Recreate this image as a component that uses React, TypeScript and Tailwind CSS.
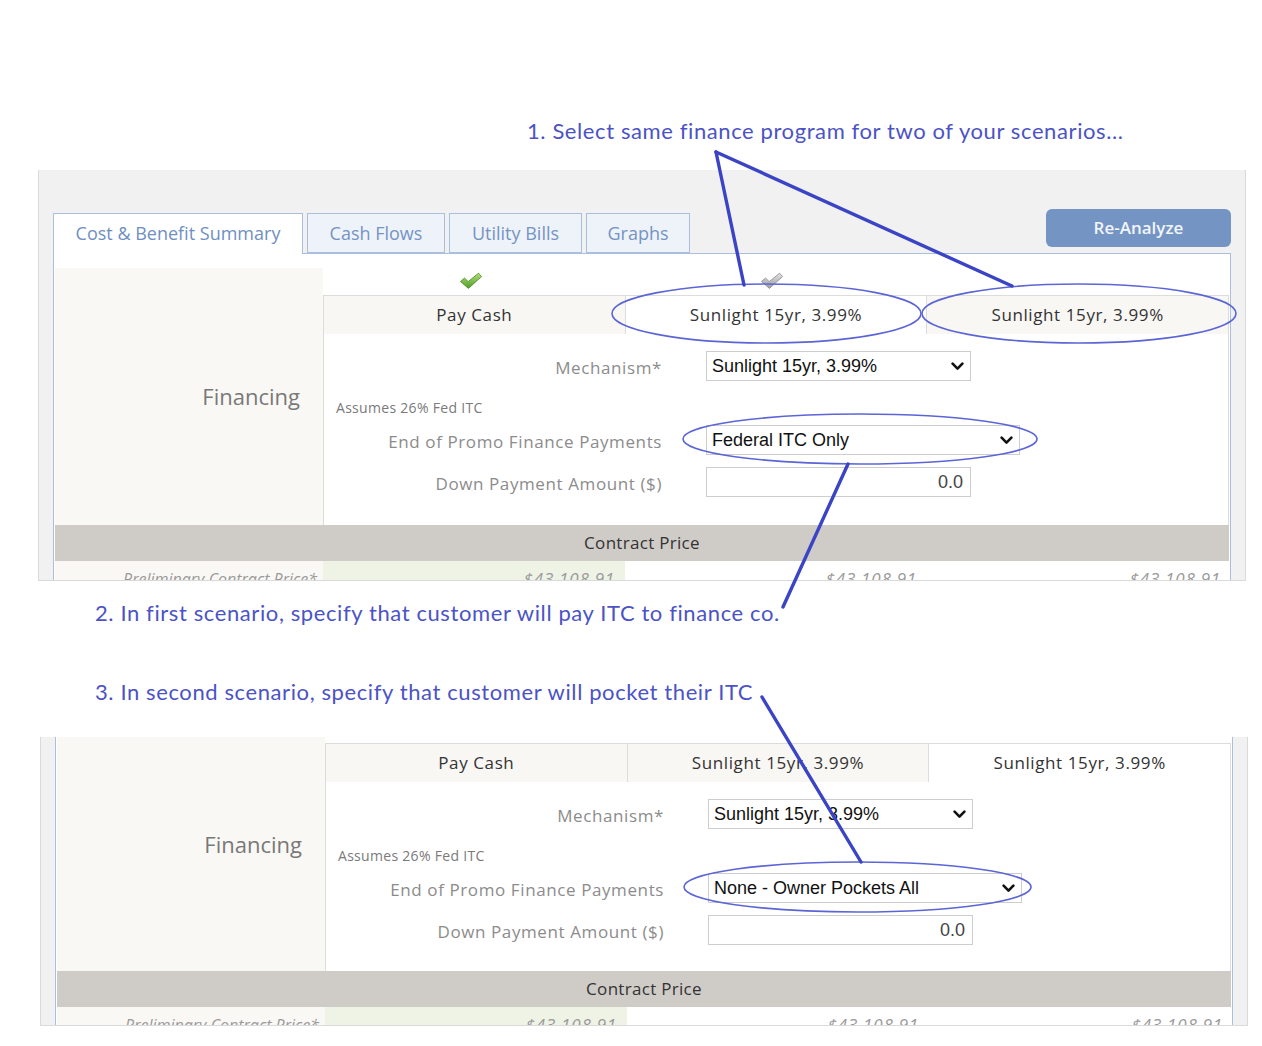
import { clsx } from 'clsx'

const columns = ['Pay Cash', 'Sunlight 15yr, 3.99%', 'Sunlight 15yr, 3.99%']

function Chevron() {
  return (
    <svg width="13" height="9" viewBox="0 0 13 9" className="ml-auto mr-[6px] shrink-0">
      <polyline
        points="1.6,1.6 6.5,6.6 11.4,1.6"
        fill="none"
        stroke="#111"
        strokeWidth="2.6"
        strokeLinecap="round"
        strokeLinejoin="round"
      />
    </svg>
  )
}

function FakeSelect({ value, className }: { value: string; className: string }) {
  return (
    <div
      className={clsx(
        "flex h-[30px] items-center border border-[#cdcdcd] bg-white pl-[5px] font-['Liberation_Sans',Arial,sans-serif] text-[18px] text-[#111]",
        className,
      )}
    >
      <span className="whitespace-nowrap">{value}</span>
      <Chevron />
    </div>
  )
}

function Check({ gray }: { gray?: boolean }) {
  const id = gray ? 'chk-gray' : 'chk-green'
  return (
    <svg width="24" height="18" viewBox="0 0 24 18">
      <defs>
        <linearGradient id={id} x1="0" y1="0" x2="0" y2="1">
          <stop offset="0" stopColor={gray ? '#e2e2e2' : '#b4e07a'} />
          <stop offset="1" stopColor={gray ? '#9c9c9c' : '#4f9b26'} />
        </linearGradient>
      </defs>
      <path
        d="M1.5 9.5 L5.5 6 L9.2 9.6 L19.6 1.2 L22.6 4.6 L9.4 16.4 Z"
        fill={`url(#${id})`}
        stroke={gray ? '#8a8a8a' : '#4a8a22'}
        strokeWidth="0.8"
        strokeLinejoin="round"
      />
    </svg>
  )
}

function FormRow({ label, children }: { label: string; children: React.ReactNode }) {
  return (
    <div className="flex h-[30px] items-center">
      <div className="w-[338px] whitespace-nowrap pt-[4px] text-right text-[17px] tracking-[0.6px] text-[#8c8c8c]">
        {label}
      </div>
      <div className="ml-[44px]">{children}</div>
    </div>
  )
}

function Scenario({
  selected,
  promo,
  showTabs,
  showChecks,
  topGap,
  bodyPb,
  finPad,
  shift,
  height,
}: {
  selected: number
  promo: string
  showTabs: boolean
  showChecks: boolean
  topGap: string
  bodyPb: string
  finPad: string
  shift: string
  height: string
}) {
  return (
    <div
      className={clsx(
        "w-[1208px] overflow-hidden border-x border-b border-[#dadada] bg-[#f1f1f1] px-[14px] font-['Open_Sans',sans-serif]",
        shift,
        height,
        showTabs ? 'pt-[39px]' : 'pt-0',
      )}
    >
      {showTabs && (
        <div className="flex h-[44px] items-start">
          <div className="mt-[4px] flex gap-[4px]">
            <div className="relative z-10 flex h-[41px] w-[250px] items-start justify-center border border-b-0 border-[#a9bfdd] bg-white pt-[6px] text-[18px] text-[#6f8fc2]">
              Cost &amp; Benefit Summary
            </div>
            <div className="flex h-[40px] w-[138px] items-center justify-center border border-[#a9bfdd] bg-[#eef3f9] text-[18px] text-[#7593c4]">
              Cash Flows
            </div>
            <div className="flex h-[40px] w-[133px] items-center justify-center border border-[#a9bfdd] bg-[#eef3f9] text-[18px] text-[#7593c4]">
              Utility Bills
            </div>
            <div className="flex h-[40px] w-[104px] items-center justify-center border border-[#a9bfdd] bg-[#eef3f9] text-[18px] text-[#7593c4]">
              Graphs
            </div>
          </div>
          <button className="ml-auto flex h-[38px] w-[185px] items-center justify-center rounded-[6px] bg-[#7494c3] text-[17px] font-semibold text-[#f2f5fb]">
            Re-Analyze
          </button>
        </div>
      )}

      <div
        className={clsx(
          'border-x border-[#a9bfdd] bg-white px-[1px]',
          showTabs ? 'border-t pt-[14px]' : 'pt-0',
        )}
      >
        <div className="grid grid-cols-[268px_1fr]">
          <div
            className={clsx(
              'flex items-center justify-end bg-[#faf8f5] pr-[23px] text-[22px] text-[#787878]',
              finPad,
            )}
          >
            Financing
          </div>
          <div>
            <div className={clsx('grid grid-cols-3', topGap)}>
              {showChecks && (
                <>
                  <div className="flex justify-center pt-[4px] pr-[6px]">
                    <Check />
                  </div>
                  <div className="flex justify-center pt-[4px] pr-[8px]">
                    <Check gray />
                  </div>
                </>
              )}
            </div>
            <div className="grid h-[39px] grid-cols-3 border-t border-r border-[#dcdcdc]">
              {columns.map((c, i) => (
                <div
                  key={i}
                  className={clsx(
                    'flex items-center justify-center border-l border-[#dcdcdc] text-[17px] tracking-[0.6px] text-[#333]',
                    i === selected ? 'bg-white' : 'bg-[#f9f7f4]',
                  )}
                >
                  {c}
                </div>
              ))}
            </div>
            <div className={clsx('border-x border-[#dcdcdc] pt-[17px]', bodyPb)}>
              <FormRow label="Mechanism*">
                <FakeSelect value="Sunlight 15yr, 3.99%" className="w-[265px]" />
              </FormRow>
              <div className="mt-[19px] h-[16px] pl-[12px] text-[14px] leading-[16px] tracking-[0.3px] text-[#7a7a7a]">
                Assumes 26% Fed ITC
              </div>
              <div className="mt-[9px]">
                <FormRow label="End of Promo Finance Payments">
                  <FakeSelect value={promo} className="w-[314px]" />
                </FormRow>
              </div>
              <div className="mt-[12px]">
                <FormRow label="Down Payment Amount ($)">
                  <div className="flex h-[30px] w-[265px] items-center justify-end border border-[#cdcdcd] bg-white pr-[7px] font-['Liberation_Sans',Arial,sans-serif] text-[18px] text-[#444]">
                    0.0
                  </div>
                </FormRow>
              </div>
            </div>
          </div>
        </div>

        <div className="flex h-[36px] items-center justify-center bg-[#cfccc7] text-[17px] tracking-[0.3px] text-[#333]">
          Contract Price
        </div>

        <div className="grid h-[30px] grid-cols-[268px_repeat(3,1fr)] italic text-[#9a9a9a]">
          <div className="whitespace-nowrap bg-[#faf8f5] pt-[6px] pr-[6px] text-right text-[16px]">
            Preliminary Contract Price*
          </div>
          <div className="bg-[#eef3e6] pt-[5px] pr-[10px] text-right text-[17px] tracking-[0.8px]">
            $43,108.91
          </div>
          <div className="bg-white pt-[5px] pr-[10px] text-right text-[17px] tracking-[0.8px]">
            $43,108.91
          </div>
          <div className="bg-white pt-[5px] pr-[8px] text-right text-[17px] tracking-[0.8px]">
            $43,108.91
          </div>
        </div>
      </div>
    </div>
  )
}

function Note({ children, className }: { children: React.ReactNode; className: string }) {
  return (
    <p
      className={clsx(
        "h-[28px] whitespace-nowrap font-['Lato',sans-serif] text-[22px] leading-[28px] tracking-[0.6px] text-[#4b53c6]",
        className,
      )}
    >
      {children}
    </p>
  )
}

export default function App() {
  return (
    <div className="relative h-[1046px] w-[1262px] overflow-hidden bg-white pt-[117px]">
      <Note className="ml-[527px]">1. Select same finance program for two of your scenarios...</Note>

      <div className="mt-[25px]">
        <Scenario
          selected={1}
          promo="Federal ITC Only"
          showTabs
          showChecks
          topGap="h-[27px]"
          bodyPb="pb-[28px]"
          finPad="pb-0"
          shift="ml-[38px]"
          height="h-[411px]"
        />
      </div>

      <Note className="mt-[18px] ml-[95px]">
        2. In first scenario, specify that customer will pay ITC to finance co.
      </Note>
      <Note className="mt-[51px] ml-[95px]">
        3. In second scenario, specify that customer will pocket their ITC
      </Note>

      <div className="mt-[31px]">
        <Scenario
          selected={2}
          promo="None - Owner Pockets All"
          showTabs={false}
          showChecks={false}
          topGap="h-[6px]"
          bodyPb="pb-[26px]"
          finPad="pb-[20px]"
          shift="ml-[40px]"
          height="h-[289px]"
        />
      </div>

      {/* annotation strokes drawn over the screenshots */}
      <svg
        className="pointer-events-none absolute left-0 top-0"
        width="1262"
        height="1046"
        viewBox="0 0 1262 1046"
      >
        <g fill="none" stroke="#5c65d6" strokeWidth="1.6">
          <ellipse cx="766.5" cy="313.5" rx="154.5" ry="29.5" />
          <ellipse cx="1079" cy="313.5" rx="157" ry="29.5" />
          <ellipse cx="860" cy="439" rx="177" ry="25" />
          <ellipse cx="857.5" cy="887" rx="173.5" ry="25" />
        </g>
        <g stroke="#3a44c4" strokeWidth="3.4" strokeLinecap="round">
          <line x1="716" y1="152" x2="744" y2="285" />
          <line x1="716" y1="152" x2="1012" y2="286" />
          <line x1="848" y1="464" x2="783" y2="607" />
          <line x1="762" y1="697" x2="861" y2="862" />
        </g>
      </svg>
    </div>
  )
}
